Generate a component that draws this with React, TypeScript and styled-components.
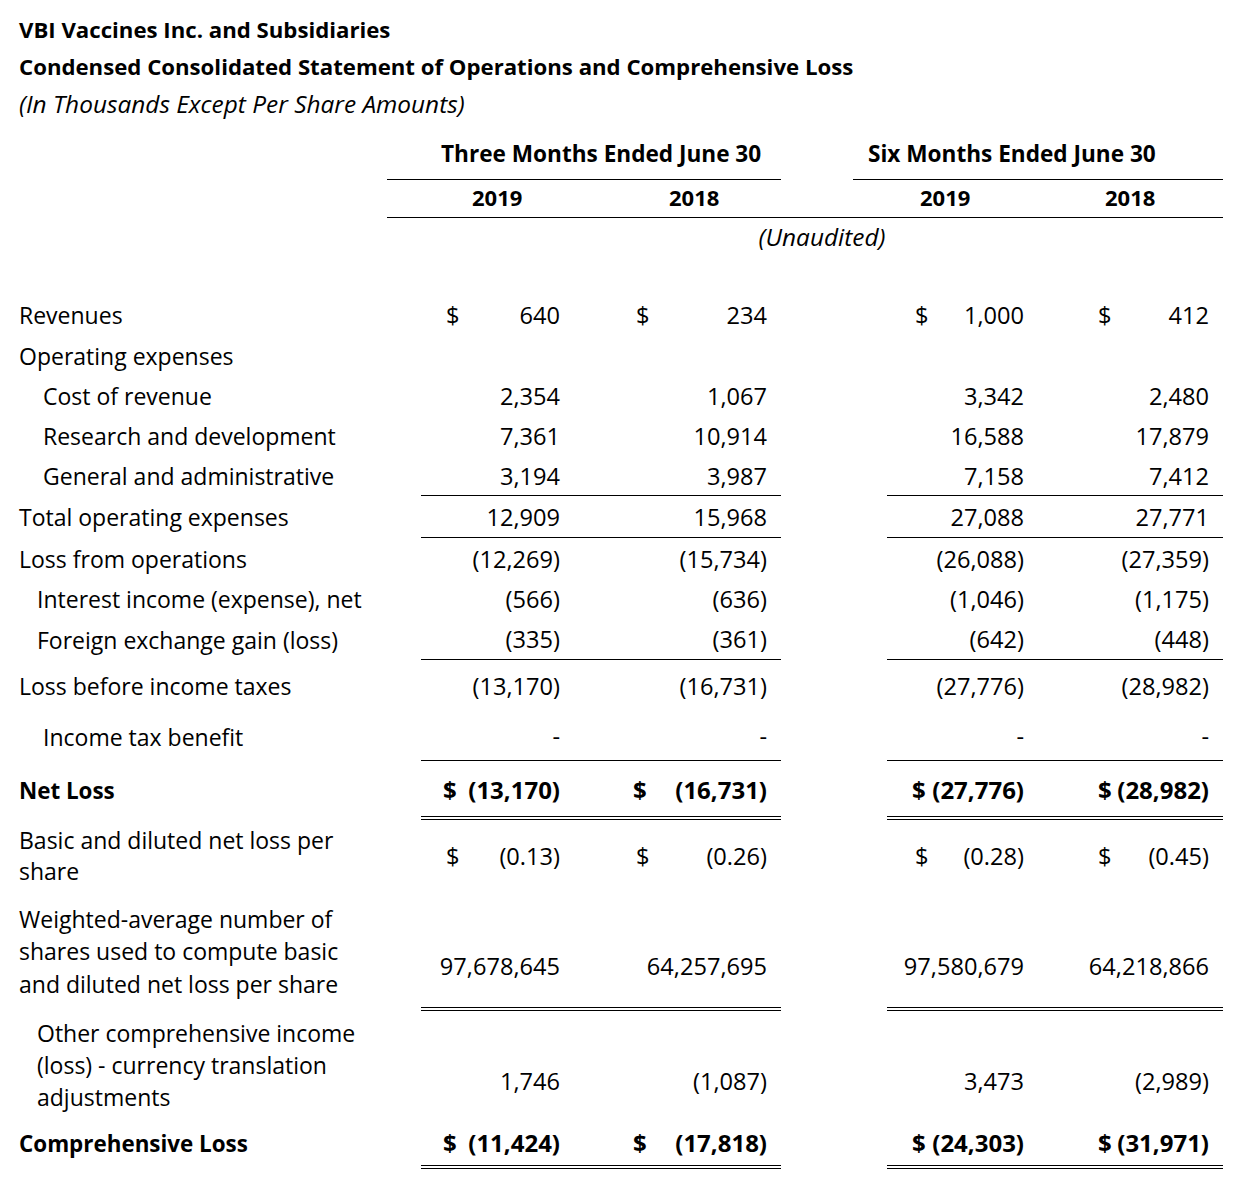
import React from "react";
import styled, { createGlobalStyle } from "styled-components";

const GlobalStyle = createGlobalStyle`
  html, body { margin: 0; padding: 0; background: #ffffff; }
  body {
    font-family: "Open Sans", "Noto Sans", "Liberation Sans", sans-serif;
    color: #000000;
    font-size: 23px;
  }
  * { box-sizing: border-box; }
`;

const Page = styled.div`
  width: 1245px;
  min-height: 1188px;
  background: #ffffff;
`;

const TitleBlock = styled.div`
  padding: 11px 0 0 19px;
`;

const TitleLine = styled.div<{ $italic?: boolean }>`
  line-height: 37px;
  height: 37px;
  font-size: ${(p) => (p.$italic ? 24.4 : 22.2)}px;
  font-weight: ${(p) => (p.$italic ? 400 : 700)};
  font-style: ${(p) => (p.$italic ? "italic" : "normal")};
  white-space: nowrap;
`;

const GroupRow = styled.div`
  display: grid;
  grid-template-columns: 387px 394px 72px 370px;
  height: 58px;
  align-items: end;
`;

const GroupCell = styled.div<{ $pad: number }>`
  border-bottom: 1px solid #000;
  padding-left: ${(p) => p.$pad}px;
  padding-bottom: 7px;
  line-height: 37px;
  font-size: 22.6px;
  font-weight: 700;
  white-space: nowrap;
`;

const YearRow = styled.div`
  margin-left: 387px;
  width: 836px;
  height: 38px;
  border-bottom: 1px solid #000;
  display: flex;
  align-items: center;
  padding-left: 85px;
  padding-bottom: 3px;
`;

const YearCell = styled.div<{ $w: number }>`
  width: ${(p) => p.$w}px;
  font-size: 22px;
  font-weight: 700;
  line-height: 30px;
`;

const Unaudited = styled.div`
  margin-left: 421px;
  width: 802px;
  text-align: center;
  font-size: 24.4px;
  font-style: italic;
  line-height: 37px;
  height: 37px;
  margin-bottom: 40px;
`;

const Row = styled.div<{ $h: number }>`
  display: grid;
  grid-template-columns: 421px 153px 207px 106px 151px 185px;
  height: ${(p) => p.$h}px;
`;

const Label = styled.div<{ $indent: number; $bold?: boolean; $lh: number }>`
  display: flex;
  align-items: center;
  padding-left: ${(p) => p.$indent}px;
  font-size: ${(p) => (p.$bold ? 22.4 : 23)}px;
  font-weight: ${(p) => (p.$bold ? 700 : 400)};
  line-height: ${(p) => p.$lh}px;
  white-space: nowrap;
`;

type Rule = "none" | "single" | "double";

const Value = styled.div<{
  $dollarPad: number;
  $rule: Rule;
  $bold?: boolean;
  $shift: number;
}>`
  display: flex;
  align-items: center;
  justify-content: space-between;
  padding: ${(p) => p.$shift * 2}px 14px 0 ${(p) => p.$dollarPad}px;
  font-size: ${(p) => (p.$bold ? 24 : 23.6)}px;
  font-weight: ${(p) => (p.$bold ? 700 : 400)};
  white-space: nowrap;
  border-bottom: ${(p) =>
    p.$rule === "single"
      ? "1px solid #000"
      : p.$rule === "double"
      ? "4px double #000"
      : "none"};
`;

const Num = styled.span`
  margin-left: auto;
`;

const Spacer = styled.div``;

type RowData = {
  label: string[];
  indent?: number;
  bold?: boolean;
  dollar?: boolean;
  vals?: string[];
  rule?: Rule;
  h: number;
  lh?: number;
  shift?: number;
};

const rows: RowData[] = [
  { label: ["Revenues"], dollar: true, vals: ["640", "234", "1,000", "412"], h: 40 },
  { label: ["Operating expenses"], h: 41 },
  { label: ["Cost of revenue"], indent: 43, vals: ["2,354", "1,067", "3,342", "2,480"], h: 40 },
  { label: ["Research and development"], indent: 43, vals: ["7,361", "10,914", "16,588", "17,879"], h: 40 },
  { label: ["General and administrative"], indent: 43, vals: ["3,194", "3,987", "7,158", "7,412"], rule: "single", h: 40 },
  { label: ["Total operating expenses"], vals: ["12,909", "15,968", "27,088", "27,771"], rule: "single", h: 42 },
  { label: ["Loss from operations"], vals: ["(12,269)", "(15,734)", "(26,088)", "(27,359)"], h: 41 },
  { label: ["Interest income (expense), net"], indent: 37, vals: ["(566)", "(636)", "(1,046)", "(1,175)"], h: 40 },
  { label: ["Foreign exchange gain (loss)"], indent: 37, vals: ["(335)", "(361)", "(642)", "(448)"], rule: "single", h: 41 },
  { label: ["Loss before income taxes"], vals: ["(13,170)", "(16,731)", "(27,776)", "(28,982)"], h: 52 },
  { label: ["Income tax benefit"], indent: 43, vals: ["-", "-", "-", "-"], rule: "single", h: 49 },
  { label: ["Net Loss"], bold: true, dollar: true, vals: ["(13,170)", "(16,731)", "(27,776)", "(28,982)"], rule: "double", h: 59, shift: 1 },
  { label: ["Basic and diluted net loss per", "share"], dollar: true, vals: ["(0.13)", "(0.26)", "(0.28)", "(0.45)"], h: 72, lh: 31 },
  {
    label: ["Weighted-average number of", "shares used to compute basic", "and diluted net loss per share"],
    vals: ["97,678,645", "64,257,695", "97,580,679", "64,218,866"],
    rule: "double",
    h: 119,
    lh: 32.5,
    shift: 16,
  },
  {
    label: ["Other comprehensive income", "(loss) - currency translation", "adjustments"],
    indent: 37,
    vals: ["1,746", "(1,087)", "3,473", "(2,989)"],
    h: 108,
    lh: 32,
    shift: 16,
  },
  { label: ["Comprehensive Loss"], bold: true, dollar: true, vals: ["(11,424)", "(17,818)", "(24,303)", "(31,971)"], rule: "double", h: 50 },
];

const dollarPads = [25, 62, 28, 60];

function StatementRow({ r }: { r: RowData }) {
  const rule = r.rule ?? "none";
  const shift = r.shift ?? 0;
  const cells = [0, 1, 2, 3].map((i) => {
    const pad = r.dollar ? dollarPads[i] - (r.bold && i !== 3 ? 3 : 0) : 0;
    return (
      <Value key={i} $dollarPad={pad} $rule={r.vals ? rule : "none"} $bold={r.bold} $shift={shift}>
        {r.dollar && <span>$</span>}
        {r.vals && <Num>{r.vals[i]}</Num>}
      </Value>
    );
  });
  return (
    <Row $h={r.h}>
      <Label $indent={r.indent ?? 19} $bold={r.bold} $lh={r.lh ?? 30}>
        <div>
          {r.label.map((l, i) => (
            <div key={i}>{l}</div>
          ))}
        </div>
      </Label>
      {cells[0]}
      {cells[1]}
      <Spacer />
      {cells[2]}
      {cells[3]}
    </Row>
  );
}

export default function App() {
  return (
    <Page>
      <GlobalStyle />
      <TitleBlock>
        <TitleLine>VBI Vaccines Inc. and Subsidiaries</TitleLine>
        <TitleLine>Condensed Consolidated Statement of Operations and Comprehensive Loss</TitleLine>
        <TitleLine $italic>(In Thousands Except Per Share Amounts)</TitleLine>
      </TitleBlock>
      <GroupRow>
        <div />
        <GroupCell $pad={54}>Three Months Ended June 30</GroupCell>
        <div />
        <GroupCell $pad={15}>Six Months Ended June 30</GroupCell>
      </GroupRow>
      <YearRow>
        <YearCell $w={197}>2019</YearCell>
        <YearCell $w={251}>2018</YearCell>
        <YearCell $w={185}>2019</YearCell>
        <YearCell $w={100}>2018</YearCell>
      </YearRow>
      <Unaudited>(Unaudited)</Unaudited>
      {rows.map((r, i) => (
        <StatementRow key={i} r={r} />
      ))}
    </Page>
  );
}
